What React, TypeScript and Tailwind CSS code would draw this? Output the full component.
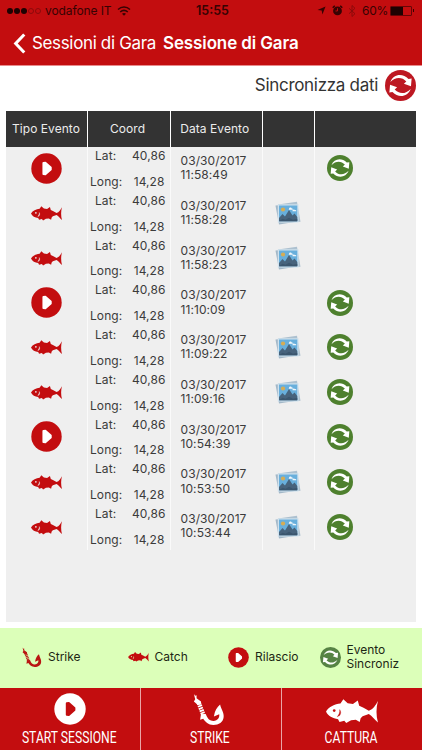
import type { ReactNode } from 'react';

type EventType = 'start' | 'catch';

interface EventRow {
    type: EventType;
    time: string;
    photo: boolean;
    synced: boolean;
}

const rows: EventRow[] = [
    { type: 'start', time: '11:58:49', photo: false, synced: true },
    { type: 'catch', time: '11:58:28', photo: true, synced: false },
    { type: 'catch', time: '11:58:23', photo: true, synced: false },
    { type: 'start', time: '11:10:09', photo: false, synced: true },
    { type: 'catch', time: '11:09:22', photo: true, synced: true },
    { type: 'catch', time: '11:09:16', photo: true, synced: true },
    { type: 'start', time: '10:54:39', photo: false, synced: true },
    { type: 'catch', time: '10:53:50', photo: true, synced: true },
    { type: 'catch', time: '10:53:44', photo: true, synced: true },
];

const PlayIcon = ({ className, arrow }: { className: string; arrow: string }) => (
    <svg viewBox="0 0 32 32" className={className}>
        <circle cx="16" cy="16" r="15.700" fill="currentColor" />
        <path d="M12.800 10.200v11.600l2 .2 5.600-5v-2l-5.600-5z" fill={arrow} stroke={arrow} strokeWidth="2" strokeLinejoin="round" />
    </svg>
);

const SyncIcon = ({ className }: { className: string }) => (
    <svg viewBox="0 0 32 32" className={className}>
        <circle cx="16" cy="16" r="16" fill="currentColor" />
        <path d="M5.500 12.500C8.500 4.200 18 2.800 24.300 9.200L27.500 8.800 26.800 16.800 19.500 14.200 22 11.800C17.500 6.800 10.500 7 5.500 12.500Z" fill="#fff" />
        <path d="M26.500 19.500C23.500 27.800 14 29.200 7.700 22.800L4.500 23.200 5.200 15.200 12.500 17.800 10 20.200C14.500 25.200 21.500 25 26.500 19.500Z" fill="#fff" />
    </svg>
);

const FishIcon = ({ className, eye }: { className: string; eye: string }) => (
    <svg viewBox="0 0 54 26" className={className}>
        <path
            d="M0 13C3 8 9 5.500 15 4.800L18 .3 22.500 4.500 28 5.200 33 1.500 34.500 7 39 9 44.500 12.200C49 10.500 51.500 6.500 54 2 52 9 52 17 54 24.500 50.500 21.500 48 17.500 44.500 15.500L38 18 36 20 35 24 31 21.500 26 22.200 21 25 19 22.500 14 24 12.500 21C7 20 2 18 0 13Z"
            fill="currentColor"
        />
        <circle cx="8.500" cy="12" r="1.400" fill={eye} />
        <path d="M14.200 11c1.400 2 1.500 4.200 0 6.200l-2.600 1.300c2-2.200 2.800-4.500 2.600-7.500Z" fill={eye} stroke={eye} strokeWidth=".3" />
    </svg>
);

const HookIcon = ({ className }: { className: string }) => (
    <svg viewBox="0 0 36 36" className={className}>
        <path d="M1 1L2.500 3 4 2.500 4 6 9 9.500 9 13 5.500 13.500 1 9.500 2.500 7Z" fill="currentColor" />
        <path d="M6.500 11l6 16" fill="none" stroke="currentColor" strokeWidth="5" strokeDasharray="2 .8" />
        <path
            d="M9 23.500L14.500 24C16.500 29.500 19 31.500 23 31.500 28 31 30 28 29.500 24L23.500 26.500C24.500 20 27 16 30.500 13 31.500 18 35 22 34.500 27 34 33 29 36 23 36 17 36 14 32.500 11.500 29L8 30Z"
            fill="currentColor"
        />
    </svg>
);

const PhotoIcon = () => (
    <svg viewBox="0 0 26 24" className="h-6 w-[26px]">
        <path d="M.5 4.500L20 3l2.500 17.500L4 23.500z" fill="#a3b8c8" />
        <path d="M3 3.500L22 .8l3.500 20L6 22z" fill="#adc1d0" />
        <path d="M2.800 3.300h20.700v18.200H2.800z" fill="#cfe2ee" />
        <path d="M4 4.500h18.300v15.700H4z" fill="#68afdc" />
        <circle cx="8" cy="8.500" r="2.100" fill="#d5ad55" />
        <path d="M14 7.800a1.500 1.500 0 0 1 2.800-.4 1 1 0 0 1 1 1.300h-4zM17.500 9.600a1.300 1.300 0 0 1 2.500-.4 1 1 0 0 1 1.300 1h-3.800z" fill="#f2f8fc" />
        <path d="M4 17l3.500-4 2.500 2.500L14 9l3.500 5.500 2-2L22.300 16v4.200H4z" fill="#47637c" />
        <path d="M4 20.200l3.500-2.500 3 1 3.500-2 4 2 4.300-1v2.500z" fill="#3b566e" />
    </svg>
);

const StatusBar = () => (
    <div className="flex h-[21px] items-center pr-[7px] pl-[7px] text-[12px] text-[#360303] *:shrink-0">
        <div className="flex w-[36px] items-center gap-[1px]">
            {[0, 1, 2].map((i) => (
                <span key={i} className="size-[6px] rounded-full bg-[#1e0202]" />
            ))}
            {[3, 4].map((i) => (
                <span key={i} className="size-[6px] rounded-full border border-[#8b0a0b]" />
            ))}
        </div>
        <span className="ml-[2px] w-[66px] tracking-[-0.1px] whitespace-nowrap">vodafone IT</span>
        <svg viewBox="0 0 14 10" className="ml-[6px] h-[10px] w-[14px]" fill="none" stroke="#360303" strokeWidth="1.500">
            <path d="M1 3.500c3.500-3.200 8.500-3.200 12 0M3.200 6c2.300-2 5.300-2 7.600 0" />
            <path d="M5 7.700c1.200-1 2.800-1 4 0L7 9.800z" fill="#360303" stroke="none" />
        </svg>
        <span className="ml-[65px] w-[34px] pt-[2px] text-[12.500px] font-semibold">15:55</span>
        <svg viewBox="0 0 10 10" className="ml-[87px] size-[9px]">
            <path d="M9.500.5L6 9.500 5.200 5 .5 4.500z" fill="#360303" />
        </svg>
        <svg viewBox="0 0 12 12" className="ml-[6px] size-[11px]">
            <circle cx="6" cy="6.500" r="4.800" fill="#360303" />
            <path d="M.8 3L3 .8M9 .8L11.200 3" stroke="#360303" strokeWidth="1.600" />
            <path d="M6 3.500v3H3.800" fill="none" stroke="#c30d0f" strokeWidth="1" />
        </svg>
        <svg viewBox="0 0 8 12" className="ml-[5px] h-3 w-2" fill="none" stroke="#8b0a0b" strokeWidth="1">
            <path d="M1 3.300l6 5.400-3 2.800V.5l3 2.800-6 5.400" />
        </svg>
        <span className="ml-[6px] w-[27px] tracking-[-0.25px]">60%</span>
        <span className="ml-[1px] flex h-[10px] w-[22px] rounded-[1px] border border-[#650606]">
            <span className="w-3 bg-[#1e0202]" />
        </span>
        <span className="ml-[1px] h-[3px] w-[1px] bg-[#360303]" />
    </div>
);

const HeadCell = ({ children }: { children?: ReactNode }) => (
    <div className="flex items-center justify-center bg-[#333] pb-px">{children}</div>
);

const columns = 'grid grid-cols-[81px_82px_91.500px_51px_1fr] gap-x-px';

const EventsTable = () => (
    <div className="mr-[6px] ml-[5.500px] h-[511px] bg-[#efefef]">
        <div className={`${columns} h-9 bg-white text-[12px] tracking-[0.05px] text-[#ececec]`}>
            <HeadCell>Tipo Evento</HeadCell>
            <HeadCell>
                <span className="pr-[2px]">Coord</span>
            </HeadCell>
            <HeadCell>
                <span className="pr-[3px]">Data Evento</span>
            </HeadCell>
            <HeadCell />
            <HeadCell />
        </div>
        {rows.map((row) => (
            <div key={row.time} className={`${columns} h-[44.780px] bg-[#fafafa] text-[12px] text-[#3b3b3b] *:bg-[#efefef]`}>
                <div className="flex items-center justify-center pb-[2px]">
                    {row.type === 'start' ? (
                        <PlayIcon className="size-[31px] text-[#c30d0f]" arrow="#fff" />
                    ) : (
                        <FishIcon className="mt-[1px] h-[15px] w-[31px] text-[#c30d0f]" eye="#efefef" />
                    )}
                </div>
                <div className="flex flex-col justify-between pt-[1px] pr-1 pb-[2px] pl-[2.500px] leading-4 tracking-[0.08px]">
                    <div className="flex justify-between pl-[5px]">
                        <span>Lat:</span>
                        <span>40,86</span>
                    </div>
                    <div className="flex justify-between pr-[1px]">
                        <span>Long:</span>
                        <span>14,28</span>
                    </div>
                </div>
                <div className="pt-[7px] pl-[10px] leading-[14.300px] tracking-[0.08px]">
                    03/30/2017
                    <br />
                    {row.time}
                </div>
                <div className="flex items-center justify-center pr-[2px] pb-[2px]">{row.photo && <PhotoIcon />}</div>
                <div className="flex items-center pb-[2px] pl-3">
                    {row.synced && <SyncIcon className="size-[26px] text-[#4e802e]" />}
                </div>
            </div>
        ))}
    </div>
);

const Legend = () => (
    <div className="mt-[5.500px] flex h-[60.500px] items-center bg-[#dcffb9] pb-px pl-[22px] text-[12px] text-[#1c2714]">
        <div className="flex w-[105.500px] items-center gap-[6px]">
            <HookIcon className="size-5 text-[#b91512]" />
            <span>Strike</span>
        </div>
        <div className="flex w-[100.500px] items-center gap-[6px]">
            <FishIcon className="h-[10px] w-[21px] text-[#c30d0f]" eye="#dcffb9" />
            <span>Catch</span>
        </div>
        <div className="flex w-[91.500px] items-center gap-[6px]">
            <PlayIcon className="size-[21px] text-[#c30d0f]" arrow="#fff" />
            <span>Rilascio</span>
        </div>
        <div className="flex items-center gap-[6px] leading-[14px]">
            <SyncIcon className="size-[21px] text-[#568344]" />
            <span>
                Evento
                <br />
                Sincroniz
            </span>
        </div>
    </div>
);

const ActionButton = ({ icon, label }: { icon: ReactNode; label: ReactNode }) => (
    <button className="flex flex-col items-center bg-[#c30d0f] pt-[5px] text-white">
        <span className="flex h-8 items-center">{icon}</span>
        <span className="mt-px mr-[2px] origin-center scale-x-[0.715] font-[Roboto] text-[17px] leading-[23px] whitespace-nowrap">
            {label}
        </span>
    </button>
);

const App = () => (
    <div className="flex h-[750px] w-[422px] flex-col overflow-hidden bg-white font-[Inter,sans-serif]">
        <header className="h-[65.500px] border-b border-[#e88b8c] bg-[#c30d0f]">
            <StatusBar />
            <div className="flex h-[45px] items-center pl-[13px] text-white">
                <svg viewBox="0 0 13 22" className="h-[21px] w-[13px]" fill="none" stroke="#fff" strokeWidth="3.200">
                    <path d="M11.500 1.500L2.500 11l9 9.500" />
                </svg>
                <span className="ml-[6px] w-[131px] text-[17px] tracking-[-0.35px] whitespace-nowrap">Sessioni di Gara</span>
                <span className="text-[17px] font-semibold tracking-[-0.12px] whitespace-nowrap">Sessione di Gara</span>
            </div>
        </header>

        <div className="flex h-[45.500px] items-center justify-end pr-[6px] pb-[5px]">
            <span className="mr-[7px] text-[17px] tracking-[-0.3px] text-[#333]">Sincronizza dati</span>
            <SyncIcon className="size-[31px] text-[#bd1822]" />
        </div>

        <EventsTable />
        <Legend />

        <footer className="grid flex-1 grid-cols-3 gap-px bg-[#e9a5a5]">
            <ActionButton icon={<PlayIcon className="size-8" arrow="#c30d0f" />} label="START SESSIONE" />
            <ActionButton icon={<HookIcon className="mr-1 size-8" />} label="STRIKE" />
            <ActionButton icon={<FishIcon className="mt-1 h-[25px] w-[54px]" eye="#c30d0f" />} label="CATTURA" />
        </footer>
    </div>
);

export default App;
